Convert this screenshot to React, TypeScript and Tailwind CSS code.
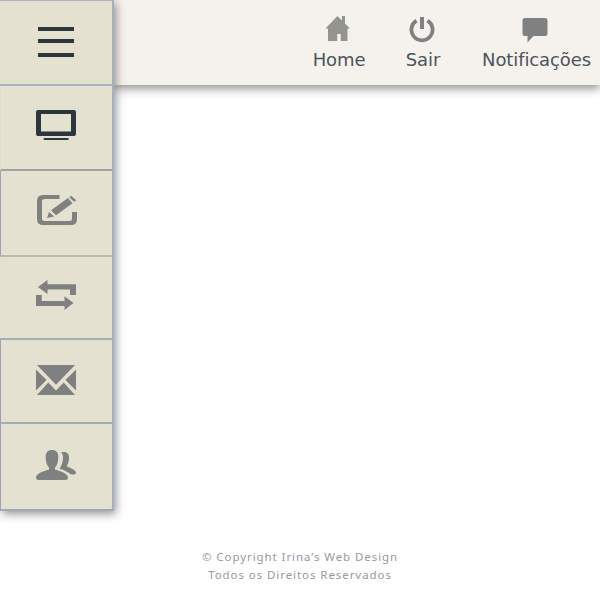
import React from "react";

type Icon = () => React.ReactElement;

const MenuIcon: Icon = () => (
  <svg width="40" height="30" viewBox="0 0 40 30" fill="#2c373d">
    <path d="M2 0h36v4H2zM2 12h36v4H2zM2 26h36v4H2z" />
  </svg>
);

const ScreenIcon: Icon = () => (
  <svg width="40" height="30" viewBox="0 0 40 30" fill="#2c373d">
    <path fillRule="evenodd" d="M2 0h36a2 2 0 0 1 2 2v22a2 2 0 0 1-2 2H2a2 2 0 0 1-2-2V2a2 2 0 0 1 2-2zM5 4v17.500h30V4z" />
    <path d="M8 28h24.500v2h-25z" />
  </svg>
);

const EditIcon: Icon = () => (
  <svg width="42" height="30" viewBox="0 0 42 30" fill="#7e817f">
    <path d="M24.500 0H8Q2 0 2 6v18q0 6 6 6h28q6 0 6-6v-7h-5v7q0 2-2.500 2H9.500Q7 26 7 23.500v-17Q7 4 9.500 4h15z" />
    <path d="M33 3l4.500 5.200L21 20.300 16 15.300zM34.300 2.300l1.700-1.500 5.200 4.400-2 1.600zM14 17l5.200 4.500-7.200 1.500z" />
  </svg>
);

const RepeatIcon: Icon = () => (
  <svg width="40" height="30" viewBox="0 0 40 30" fill="#7e817f">
    <path d="M2 7L11.500 0v4.200H40V15h-6V9.500H11.500V14zM0 15h5.800v6H28.500v-4.800L37.500 23l-9 7v-4H0z" />
  </svg>
);

const MailIcon: Icon = () => (
  <svg width="40" height="30" viewBox="0 0 40 30" fill="#7e817f">
    <path d="M1 0h38L20 19.700zM0 4.500L10.500 15 0 25.500zM40 4.500L29.500 15 40 25.500zM12.300 17.500L20 25.500l7.700-8L39 30H1z" />
  </svg>
);

const UsersIcon: Icon = () => (
  <svg width="40" height="30" viewBox="0 0 40 30" fill="#7e817f">
    <path d="M16 0c4.300 0 6.300 2.300 6.300 7 0 4.800-1 8-3.300 10.800v2c4 .7 13 3.700 13 7.700 0 1.700-1.200 2.500-3 2.500H3c-1.800 0-3-.8-3-2.500 0-4 9-7 13-7.700v-2C10.700 15 9.700 11.800 9.700 7 9.700 2.300 11.700 0 16 0z" />
    <path d="M25 2.300c4.500-1 8 .2 8 5.200 0 3.500-.7 6-2.300 8.700 3 1.800 9.300 3.500 9.300 6.500 0 1.200-1 1.800-3 1.800-2 0-2.500-.5-4-1.500-3-2-6-3.600-9.500-4.300 2-3.500 3.700-6.500 3.500-11.500-.1-2.200-.7-3.700-2-4.900z" />
  </svg>
);

const HomeIcon: Icon = () => (
  <svg width="26" height="28" viewBox="0 0 26 28" fill="#92948d">
    <path d="M.5 13.500L12.500 1 17 5.500V1h3v7.500l5 5h-2.500V26h-6.800v-7h-3.500v7H3V13.500z" />
  </svg>
);

const PowerIcon: Icon = () => (
  <svg width="26" height="28" viewBox="0 0 26 28" fill="none" stroke="#7e817f" strokeWidth="3.800">
    <path d="M7.500 5.700a10.600 10.600 0 1 0 11 0" />
    <path d="M13 2v12" strokeWidth="4" />
  </svg>
);

const BubbleIcon: Icon = () => (
  <svg width="26" height="28" viewBox="0 0 26 28" fill="#7e817f">
    <path d="M3 3h20q2.500 0 2.500 2.500v13q0 2.500-2.500 2.500H11.500L5.500 27.500V21H3Q.5 21 .5 18.500v-13Q.5 3 3 3z" />
  </svg>
);

const rows: { label: string; icon: Icon; row: string }[] = [
  { label: "Menu", icon: MenuIcon, row: "h-[86px] pt-[26px] border-t border-b-2 border-t-[#abb5bf] border-b-[#abb5bf]" },
  { label: "Tela", icon: ScreenIcon, row: "h-[85px] pt-6 pr-px border-b-2 border-b-[#a0a3a3] border-l border-l-[#dedbd0]" },
  { label: "Editar", icon: EditIcon, row: "h-[86px] pt-6 pr-px border-b-2 border-b-[#b5b8b3] border-l border-l-[#9da4b1]" },
  { label: "Repetir", icon: RepeatIcon, row: "h-[83px] pt-[23px] border-b-2 border-b-[#a6adb4]" },
  { label: "Mensagens", icon: MailIcon, row: "h-[84px] pt-[25px] pr-px border-b-2 border-b-[#a6adb5] border-l border-l-[#9da4b1]" },
  { label: "Contatos", icon: UsersIcon, row: "h-[87px] pt-[26px] pr-px border-b-2 border-b-[#a2a9b2] border-l border-l-[#9da4b1]" },
];

const NavItem = ({ icon: Icon, label, className, iconClass }: { icon: Icon; label: string; className: string; iconClass: string }) => (
  <a className={`flex flex-col items-center whitespace-nowrap ${className}`}>
    <span className={`block h-7 ${iconClass}`}>
      <Icon />
    </span>
    <span className="mt-[6px] text-[18px] leading-[22px]">{label}</span>
  </a>
);

export default function App() {
  return (
    <div className="flex h-[600px] w-[600px] flex-col overflow-hidden bg-white">
      <div className="flex h-[511px] items-start">
        <aside className="relative z-10 w-[114px] shrink-0 border-r-2 border-[#a6b0bb] bg-[#e4e1d0] shadow-[2px_3px_9px_0px_rgba(0,0,0,0.42)]">
          {rows.map(({ label, icon: Icon, row }) => (
            <div key={label} aria-label={label} className={`flex w-full items-start justify-center ${row}`}>
              <Icon />
            </div>
          ))}
        </aside>
        <header className="flex h-[85px] w-[486px] shrink-0 bg-[#f5f2ed] pt-[15px] font-['DejaVu_Sans',Verdana,sans-serif] text-[#4c535b] tracking-[-0.1px] shadow-[0_3px_10px_0px_rgba(0,0,0,0.48)]">
          <NavItem icon={HomeIcon} label="Home" className="ml-[199px] w-[52px]" iconClass="pr-[3px]" />
          <NavItem icon={PowerIcon} label="Sair" className="ml-[40px] w-[36px]" iconClass="pr-[2px]" />
          <NavItem icon={BubbleIcon} label="Notificações" className="ml-[41px] w-[109px]" iconClass="pr-[4px]" />
        </header>
      </div>
      <footer className="mt-[37px] text-center font-['Noto_Sans',sans-serif] text-[11.5px] leading-[18px] tracking-[0.93px] text-[#949a9e]">
        <p>© Copyright Irina’s Web Design</p>
        <p>Todos os Direitos Reservados</p>
      </footer>
    </div>
  );
}
